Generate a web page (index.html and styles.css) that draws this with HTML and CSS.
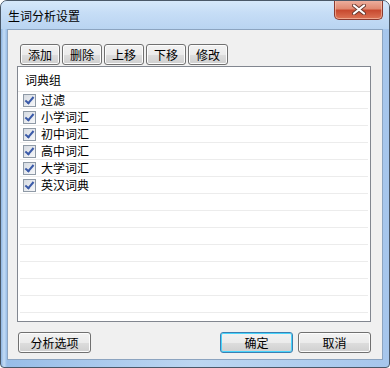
FILE: index.html
```html
<!DOCTYPE html>
<html lang="zh-CN">

<head>
  <meta charset="UTF-8">
  <title>生词分析设置</title>
  <link rel="stylesheet" href="styles.css">
</head>

<body>
  <div class="window">
    <div class="titlebar">
      <span class="title">生词分析设置</span>
      <a class="close">
        <svg width="14" height="11" viewBox="0 0 14 11">
          <path d="M2 1.5 L12 9.5 M12 1.5 L2 9.5" stroke="#6a3a30" stroke-width="4" stroke-linecap="round" />
          <path d="M2 1.5 L12 9.5 M12 1.5 L2 9.5" stroke="#fff" stroke-width="2.2" stroke-linecap="round" />
        </svg>
      </a>
    </div>
    <div class="client">
      <div class="toolbar">
        <button class="btn">添加</button>
        <button class="btn">删除</button>
        <button class="btn">上移</button>
        <button class="btn">下移</button>
        <button class="btn">修改</button>
      </div>
      <div class="list">
        <div class="head">词典组</div>
        <ul class="rows">
          <li class="row"><span class="check"></span>过滤</li>
          <li class="row"><span class="check"></span>小学词汇</li>
          <li class="row"><span class="check"></span>初中词汇</li>
          <li class="row"><span class="check"></span>高中词汇</li>
          <li class="row"><span class="check"></span>大学词汇</li>
          <li class="row"><span class="check"></span>英汉词典</li>
          <li class="row"></li>
          <li class="row"></li>
          <li class="row"></li>
          <li class="row"></li>
          <li class="row"></li>
          <li class="row"></li>
          <li class="row"></li>
        </ul>
      </div>
      <div class="footer">
        <button class="btn wide">分析选项</button>
        <span class="spacer"></span>
        <button class="btn wide default">确定</button>
        <button class="btn wide">取消</button>
      </div>
    </div>
  </div>
</body>

</html>
```

FILE: styles.css
```css
body {
  margin: 0;
  background: #fff;
  font-family: "Noto Sans CJK SC", "Liberation Sans", sans-serif;
  font-size: 12px;
  color: #000;
}

ul {
  padding: 0;
  margin: 0;
  list-style: none;
}

.window {
  width: 388px;
  height: 366px;
  border: 1px solid #4a5868;
  border-radius: 7px 7px 4px 4px;
  background: linear-gradient(90deg, #8fb6e3 0, #c3dbf4 3px, #98bde8 6px, #bcd6f1 50%, #a6c6ec 100%);
  display: flex;
  flex-direction: column;
  overflow: hidden;
}

.titlebar {
  height: 28px;
  display: flex;
  align-items: flex-start;
  background: linear-gradient(180deg, #d6e8fa 0, #c6ddf6 12px, #b9d4f1 28px);
}

.title {
  margin: 6px 0 0 7px;
  line-height: 17px;
  color: #000;
}

.close {
  margin-left: auto;
  margin-right: 6px;
  width: 47px;
  height: 19px;
  margin-top: -1px;
  border: 1px solid #8a3a30;
  border-top: none;
  border-radius: 0 0 5px 5px;
  background: linear-gradient(180deg, #eeb2a2 0, #e08a72 45%, #c84a30 55%, #dc7456 100%);
  display: flex;
  align-items: center;
  justify-content: center;
  box-shadow: inset 0 0 0 1px rgba(255, 210, 190, 0.55);
}

.client {
  flex: 1;
  margin: 0 6px 7px 6px;
  border: 1px solid #8ca4c0;
  background: #f0f0f0;
  padding: 14px 11px 6px 9px;
  display: flex;
  flex-direction: column;
}

.toolbar {
  display: flex;
  gap: 2px;
  margin-left: 3px;
  margin-bottom: 1px;
}

.btn {
  font-family: "Noto Sans CJK SC", "Liberation Sans", sans-serif;
  font-size: 12px;
  height: 21px;
  width: 40px;
  padding: 0;
  border: 1px solid #707070;
  border-radius: 3px;
  background: linear-gradient(180deg, #f2f2f2 0, #ebebeb 50%, #dddddd 51%, #cfcfcf 100%);
  box-shadow: inset 0 0 0 1px #fcfcfc;
  color: #000;
  line-height: 18px;
}

.list {
  height: 254px;
  border: 1px solid #828790;
  background: #fff;
}

.head {
  height: 24px;
  line-height: 25px;
  padding-left: 7px;
  border-bottom: 1px solid #e5e5e5;
}

.rows {
  padding: 0 2px;
}

.row {
  height: 16px;
  line-height: 16px;
  border-bottom: 1px solid #ececec;
  display: flex;
  align-items: center;
  padding-left: 3px;
}

.check {
  width: 11px;
  height: 11px;
  border: 1px solid #8f9aa6;
  margin-right: 5px;
  background: linear-gradient(135deg, #d6dbe2 0, #f6f7f9 100%);
  position: relative;
}

.check::after {
  content: '';
  position: absolute;
  left: 3px;
  top: 0px;
  width: 3px;
  height: 7px;
  border: solid #3a5aa8;
  border-width: 0 2px 2px 0;
  transform: rotate(40deg);
}

.footer {
  display: flex;
  gap: 5px;
  margin-top: 10px;
  padding-left: 1px;
}

.spacer {
  flex: 1;
}

.wide {
  width: 73px;
}

.default {
  border-color: #3c7fb1;
  box-shadow: inset 0 0 0 1px #48d4fc;
}
```
